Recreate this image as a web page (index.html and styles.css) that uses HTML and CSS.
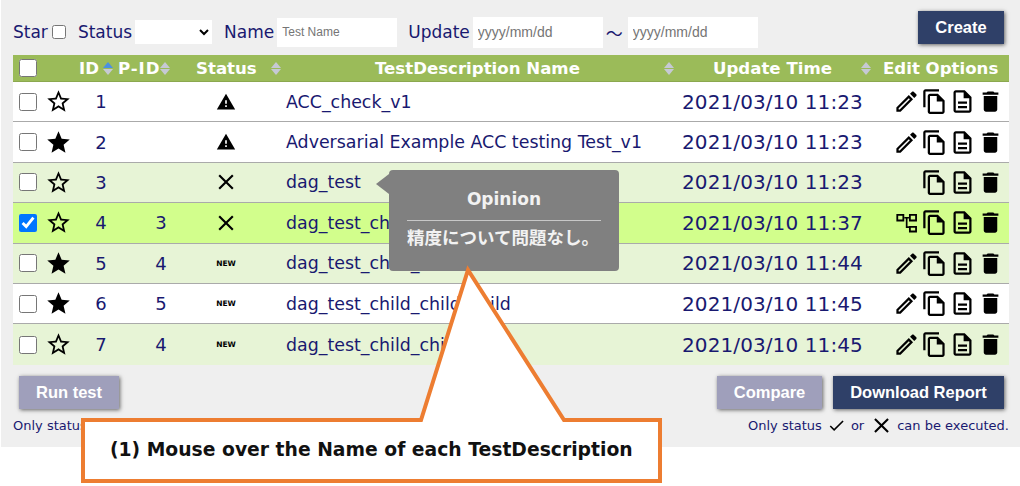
FILE: index.html
```html
<!DOCTYPE html>
<html lang="en">
<head>
    <meta charset="UTF-8">
    <title>TestDescription List</title>
    <link rel="stylesheet" href="styles.css">
</head>
<body>
    <svg class="icon-defs" width="0" height="0">
        <symbol id="i-star" viewBox="0 0 24 24"><path d="M12 17.27L18.18 21l-1.64-7.03L22 9.24l-7.19-.61L12 2 9.19 8.63 2 9.24l5.46 4.73L5.82 21z"/></symbol>
        <symbol id="i-star-o" viewBox="0 0 24 24"><path d="M22 9.24l-7.19-.62L12 2 9.19 8.63 2 9.24l5.46 4.73L5.82 21 12 17.27 18.18 21l-1.63-7.03L22 9.24zM12 15.4l-3.76 2.27 1-4.28-3.32-2.88 4.38-.38L12 6.1l1.71 4.04 4.38.38-3.32 2.88 1 4.28L12 15.4z"/></symbol>
        <symbol id="i-warn" viewBox="0 0 24 24"><path d="M1 21h22L12 2 1 21zm12-3h-2v-2h2v2zm0-4h-2v-4h2v4z"/></symbol>
        <symbol id="i-close" viewBox="0 0 24 24"><path d="M19 6.41L17.59 5 12 10.59 6.41 5 5 6.41 10.59 12 5 17.59 6.41 19 12 13.41 17.59 19 19 17.59 13.41 12z"/></symbol>
        <symbol id="i-check" viewBox="0 0 24 24"><path d="M9 16.17L4.83 12l-1.42 1.41L9 19 21 7l-1.41-1.41z"/></symbol>
        <symbol id="i-edit" viewBox="0 0 24 24"><path d="M14.06 9.02l.92.92L5.92 19H5v-.92l9.06-9.06M17.66 3c-.25 0-.51.1-.7.29l-1.83 1.83 3.75 3.75 1.83-1.83c.39-.39.39-1.02 0-1.41l-2.34-2.34c-.2-.2-.45-.29-.71-.29zm-3.6 3.19L3 17.25V21h3.75L17.81 9.94l-3.75-3.75z"/></symbol>
        <symbol id="i-copy" viewBox="0 0 24 24"><path d="M16 1H4c-1.1 0-2 .9-2 2v14h2V3h12V1zm-1 4H8c-1.1 0-1.99.9-1.99 2L6 21c0 1.1.89 2 1.99 2H19c1.1 0 2-.9 2-2V11l-6-6zM8 21V7h6v5h5v9H8z"/></symbol>
        <symbol id="i-doc" viewBox="0 0 24 24"><path d="M8 16h8v2H8zm0-4h8v2H8zm6-10H6c-1.1 0-2 .9-2 2v16c0 1.1.89 2 1.99 2H18c1.1 0 2-.9 2-2V8l-6-6zm4 18H6V4h7v5h5v11z"/></symbol>
        <symbol id="i-trash" viewBox="0 0 24 24"><path d="M6 19c0 1.1.9 2 2 2h8c1.1 0 2-.9 2-2V7H6v12zM19 4h-3.5l-1-1h-5l-1 1H5v2h14V4z"/></symbol>
        <symbol id="i-tree" viewBox="0 0 24 24"><path fill-rule="evenodd" d="M3 4.500h7V11H3zM4.600 6.100v3.300h3.800V6.100zM14.200 4.500h7.100V11h-7.100zM15.800 6.100v3.300h3.900V6.100zM14.200 15h7.100v5.800h-7.100zM15.800 16.600v2.600h3.900v-2.600z"/><path d="M10 7h4.200v1.500H10zM11.400 8.500h1.500v8.300h-1.500zM12.900 15.300h1.300v1.500h-1.300z"/></symbol>
    </svg>

    <div class="panel">
        <div class="filters">
            <label class="filter-label">Star</label>
            <input type="checkbox" class="star-check">
            <label class="filter-label status-label">Status</label>
            <select class="status-select"><option></option></select>
            <label class="filter-label name-label">Name</label>
            <input type="text" class="name-input" placeholder="Test Name">
            <label class="filter-label update-label">Update</label>
            <input type="text" class="date-input" placeholder="yyyy/mm/dd">
            <span class="tilde">～</span>
            <input type="text" class="date-input" placeholder="yyyy/mm/dd">
            <button class="btn btn-dark btn-create">Create</button>
        </div>

        <div class="table">
            <div class="row head">
                <div class="cell"><input type="checkbox" class="big-check"></div>
                <div class="cell"></div>
                <div class="cell head-id">ID<span class="sort asc"></span></div>
                <div class="cell head-pid">P-ID<span class="sort"></span></div>
                <div class="cell head-status">Status<span class="sort"></span></div>
                <div class="cell head-name">TestDescription Name<span class="sort"></span></div>
                <div class="cell head-time">Update Time<span class="sort"></span></div>
                <div class="cell head-opts">Edit Options</div>
            </div>

            <div class="row">
                <div class="cell"><input type="checkbox" class="big-check"></div>
                <div class="cell"><svg class="star"><use href="#i-star-o"/></svg></div>
                <div class="cell num">1</div>
                <div class="cell num pid"></div>
                <div class="cell state"><svg class="warn"><use href="#i-warn"/></svg></div>
                <div class="cell name">ACC_check_v1</div>
                <div class="cell time">2021/03/10 11:23</div>
                <div class="cell opts">
                    <svg class="opt"><use href="#i-edit"/></svg>
                    <svg class="opt"><use href="#i-copy"/></svg>
                    <svg class="opt"><use href="#i-doc"/></svg>
                    <svg class="opt"><use href="#i-trash"/></svg>
                </div>
            </div>

            <div class="row">
                <div class="cell"><input type="checkbox" class="big-check"></div>
                <div class="cell"><svg class="star"><use href="#i-star"/></svg></div>
                <div class="cell num">2</div>
                <div class="cell num pid"></div>
                <div class="cell state"><svg class="warn"><use href="#i-warn"/></svg></div>
                <div class="cell name">Adversarial Example ACC testing Test_v1</div>
                <div class="cell time">2021/03/10 11:23</div>
                <div class="cell opts">
                    <svg class="opt"><use href="#i-edit"/></svg>
                    <svg class="opt"><use href="#i-copy"/></svg>
                    <svg class="opt"><use href="#i-doc"/></svg>
                    <svg class="opt"><use href="#i-trash"/></svg>
                </div>
            </div>

            <div class="row tint">
                <div class="cell"><input type="checkbox" class="big-check"></div>
                <div class="cell"><svg class="star"><use href="#i-star-o"/></svg></div>
                <div class="cell num">3</div>
                <div class="cell num pid"></div>
                <div class="cell state"><svg class="cross"><use href="#i-close"/></svg></div>
                <div class="cell name">dag_test</div>
                <div class="cell time">2021/03/10 11:23</div>
                <div class="cell opts">
                    <svg class="opt"><use href="#i-copy"/></svg>
                    <svg class="opt"><use href="#i-doc"/></svg>
                    <svg class="opt"><use href="#i-trash"/></svg>
                </div>
            </div>

            <div class="row picked">
                <div class="cell"><input type="checkbox" class="big-check" checked></div>
                <div class="cell"><svg class="star"><use href="#i-star-o"/></svg></div>
                <div class="cell num">4</div>
                <div class="cell num pid">3</div>
                <div class="cell state"><svg class="cross"><use href="#i-close"/></svg></div>
                <div class="cell name">dag_test_child</div>
                <div class="cell time">2021/03/10 11:37</div>
                <div class="cell opts">
                    <svg class="opt"><use href="#i-tree"/></svg>
                    <svg class="opt"><use href="#i-copy"/></svg>
                    <svg class="opt"><use href="#i-doc"/></svg>
                    <svg class="opt"><use href="#i-trash"/></svg>
                </div>
            </div>

            <div class="row tint">
                <div class="cell"><input type="checkbox" class="big-check"></div>
                <div class="cell"><svg class="star"><use href="#i-star"/></svg></div>
                <div class="cell num">5</div>
                <div class="cell num pid">4</div>
                <div class="cell state"><span class="new">NEW</span></div>
                <div class="cell name">dag_test_child_child</div>
                <div class="cell time">2021/03/10 11:44</div>
                <div class="cell opts">
                    <svg class="opt"><use href="#i-edit"/></svg>
                    <svg class="opt"><use href="#i-copy"/></svg>
                    <svg class="opt"><use href="#i-doc"/></svg>
                    <svg class="opt"><use href="#i-trash"/></svg>
                </div>
            </div>

            <div class="row">
                <div class="cell"><input type="checkbox" class="big-check"></div>
                <div class="cell"><svg class="star"><use href="#i-star"/></svg></div>
                <div class="cell num">6</div>
                <div class="cell num pid">5</div>
                <div class="cell state"><span class="new">NEW</span></div>
                <div class="cell name">dag_test_child_child_child</div>
                <div class="cell time">2021/03/10 11:45</div>
                <div class="cell opts">
                    <svg class="opt"><use href="#i-edit"/></svg>
                    <svg class="opt"><use href="#i-copy"/></svg>
                    <svg class="opt"><use href="#i-doc"/></svg>
                    <svg class="opt"><use href="#i-trash"/></svg>
                </div>
            </div>

            <div class="row tint last">
                <div class="cell"><input type="checkbox" class="big-check"></div>
                <div class="cell"><svg class="star"><use href="#i-star-o"/></svg></div>
                <div class="cell num">7</div>
                <div class="cell num pid">4</div>
                <div class="cell state"><span class="new">NEW</span></div>
                <div class="cell name">dag_test_child_child</div>
                <div class="cell time">2021/03/10 11:45</div>
                <div class="cell opts">
                    <svg class="opt"><use href="#i-edit"/></svg>
                    <svg class="opt"><use href="#i-copy"/></svg>
                    <svg class="opt"><use href="#i-doc"/></svg>
                    <svg class="opt"><use href="#i-trash"/></svg>
                </div>
            </div>
        </div>

        <div class="actions">
            <div class="action-side">
                <button class="btn btn-muted btn-run">Run test</button>
                <div class="note">Only status <svg class="note-check"><use href="#i-check"/></svg> or <svg class="note-cross"><use href="#i-close"/></svg> can be executed.</div>
            </div>
            <div class="action-side right">
                <div class="action-btns">
                    <button class="btn btn-muted btn-compare">Compare</button>
                    <button class="btn btn-dark btn-report">Download Report</button>
                </div>
                <div class="note">Only status <svg class="note-check"><use href="#i-check"/></svg> or <svg class="note-cross"><use href="#i-close"/></svg> can be executed.</div>
            </div>
        </div>
    </div>

    <!-- hover tooltip -->
    <div class="tooltip">
        <div class="tooltip-title">Opinion</div>
        <div class="tooltip-body">精度について問題なし。</div>
    </div>

    <!-- annotation callout -->
    <svg class="callout-shape" width="1020" height="486">
        <polygon points="83,420 421,420 468,270 564,420 660,420 660,481 83,481" fill="#fff" stroke="#ed7d31" stroke-width="4"/>
    </svg>
    <div class="callout-text">(1) Mouse over the Name of each TestDescription</div>
</body>
</html>
```

FILE: styles.css
```css
html, body {
    margin: 0;
    height: 486px;
    overflow: hidden;
    background-color: #fff;
}

body {
    position: relative;
    font-family: "DejaVu Sans", Verdana, sans-serif;
    color: #191970;
}

.icon-defs {
    position: absolute;
}

.panel {
    height: 447px;
    margin-left: 1px;
    padding: 0 11px 0 12px;
    background-color: #efefef;
}

/* filter bar */
.filters {
    display: flex;
    align-items: center;
    box-sizing: border-box;
    height: 55px;
    padding-top: 9px;
}

.filter-label {
    font-size: 17px;
}

.star-check {
    width: 14px;
    height: 14px;
    margin: 0 0 0 4px;
}

.status-label {
    margin-left: 12px;
}

.status-select {
    width: 77px;
    height: 24px;
    margin-left: 3px;
    border: none;
    background-color: #fff;
}

.name-label {
    margin-left: 12px;
}

.name-input, .date-input {
    box-sizing: border-box;
    margin-left: 3px;
    padding: 0 5px;
    border: none;
    background-color: #fff;
    font-family: "Liberation Sans", Arial, sans-serif;
}

.name-input {
    width: 120px;
    height: 29px;
    font-size: 12px;
}

.date-input {
    width: 130px;
    height: 31px;
    font-size: 14px;
}

.update-label {
    margin-left: 11px;
}

.tilde {
    width: 19px;
    margin-left: 3px;
    font-family: "Noto Sans CJK JP", sans-serif;
    font-size: 17px;
}

.name-input::placeholder, .date-input::placeholder {
    color: #757575;
}

/* buttons */
.btn {
    border: none;
    color: #fff;
    font-family: "Liberation Sans", Arial, sans-serif;
    font-size: 16.5px;
    font-weight: bold;
    height: 33px;
    box-shadow: 1px 1px 4px rgba(0, 0, 0, 0.6);
}

.btn-dark {
    background-color: #2f4068;
}

.btn-muted {
    background-color: #9f9fbb;
}

.btn-create {
    width: 86px;
    margin: -9px 5px 0 auto;
}

.btn-run {
    width: 100px;
    margin-left: 6px;
}

.btn-compare {
    width: 105px;
}

.btn-report {
    width: 171px;
    margin-left: 11px;
}

/* table */
.row {
    display: grid;
    grid-template-columns: 31px 35px 39px 72px 96px 394px 200px 129px;
    height: 40.4px;
    box-sizing: border-box;
    align-items: center;
    border-bottom: 1px solid #aaa;
    background-color: #fff;
    font-size: 17.4px;
}

.row.tint {
    background-color: #e7f4d6;
}

.row.picked {
    background-color: #d2fe8c;
}

.row.last {
    border-bottom: none;
}

.head {
    height: 27px;
    background-color: #9bbb59;
    color: #fff;
    font-weight: bold;
    font-size: 16.6px;
    border-bottom: 1px solid #8ba84f;
}

.cell {
    display: flex;
    align-items: center;
}

.big-check {
    width: 18px;
    height: 18px;
    margin: 0 0 0 6px;
}

.star {
    width: 27px;
    height: 27px;
    margin-left: 1px;
}

.num {
    justify-content: center;
    padding-left: 5px;
    font-size: 18px;
}

.pid {
    padding-left: 14px;
    width: 58px;
    box-sizing: content-box;
    padding-right: 0;
}

.state {
    justify-content: center;
    width: 72px;
}

.warn {
    width: 20px;
    height: 20px;
}

.cross {
    width: 26px;
    height: 26px;
}

.new {
    font-size: 7.5px;
    font-weight: bold;
    color: #000;
}

.time {
    padding-left: 2px;
    font-size: 20px;
    letter-spacing: 0.1px;
}

.opts {
    justify-content: flex-end;
    gap: 1px;
    padding-right: 5px;
}

.opt {
    width: 27px;
    height: 27px;
}

/* header cells, sort arrows */
.head-id {
    justify-content: space-between;
    padding-right: 5px;
}

.head-pid {
    letter-spacing: 0.9px;
    padding-right: 18px;
}

.head-status {
    padding-left: 6px;
}

.head-status .sort {
    margin-left: 14px;
}

.head-name {
    padding-left: 89px;
}

.head-name .sort {
    margin-left: auto;
    margin-right: 6px;
}

.head-time {
    padding-left: 33px;
}

.head-time .sort {
    margin-left: auto;
    margin-right: 9px;
}

.head-opts {
    padding-left: 3px;
}

.sort {
    display: inline-block;
    width: 10px;
    flex: none;
}

.sort::before, .sort::after {
    content: '';
    display: block;
    width: 0;
    border-left: 5.5px solid transparent;
    border-right: 5.5px solid transparent;
}

.sort::before {
    border-bottom: 6px solid #c6c9d4;
    margin-bottom: 1px;
}

.sort::after {
    border-top: 6px solid #c6c9d4;
}

.sort.asc::before {
    border-bottom-color: #4a90e2;
}

/* under the table */
.actions {
    display: flex;
    justify-content: space-between;
    padding-top: 11px;
}

.action-side.right {
    display: flex;
    flex-direction: column;
    align-items: flex-end;
}

.action-btns {
    display: flex;
    padding-right: 5px;
}

.note {
    display: flex;
    align-items: center;
    height: 26px;
    margin-top: 4px;
    font-size: 13px;
}

.note-check {
    width: 19px;
    height: 19px;
    margin: 0 5px;
    fill: #000;
}

.note-cross {
    width: 25px;
    height: 25px;
    margin: 0 3px 0 5px;
    fill: #000;
}

/* overlays */
.tooltip {
    position: absolute;
    left: 389px;
    top: 170px;
    box-sizing: border-box;
    width: 230px;
    height: 101px;
    padding: 0 18px;
    border-radius: 4px;
    background-color: #808080;
    color: #f2f2f2;
    font-weight: bold;
}

.tooltip::before {
    content: '';
    position: absolute;
    left: -13px;
    top: 4px;
    border-top: 10px solid transparent;
    border-bottom: 10px solid transparent;
    border-right: 13px solid #808080;
}

.tooltip-title {
    height: 51px;
    box-sizing: border-box;
    padding-top: 19px;
    border-bottom: 1px solid #c8c8c8;
    text-align: center;
    font-size: 17px;
    line-height: 20px;
}

.tooltip-body {
    padding-top: 3px;
    font-family: "Noto Sans CJK JP", sans-serif;
    font-size: 17.5px;
}

.callout-shape {
    position: absolute;
    left: 0;
    top: 0;
}

.callout-text {
    position: absolute;
    left: 110px;
    top: 439px;
    color: #111;
    font-size: 18.75px;
    font-weight: bold;
    white-space: nowrap;
}
```
